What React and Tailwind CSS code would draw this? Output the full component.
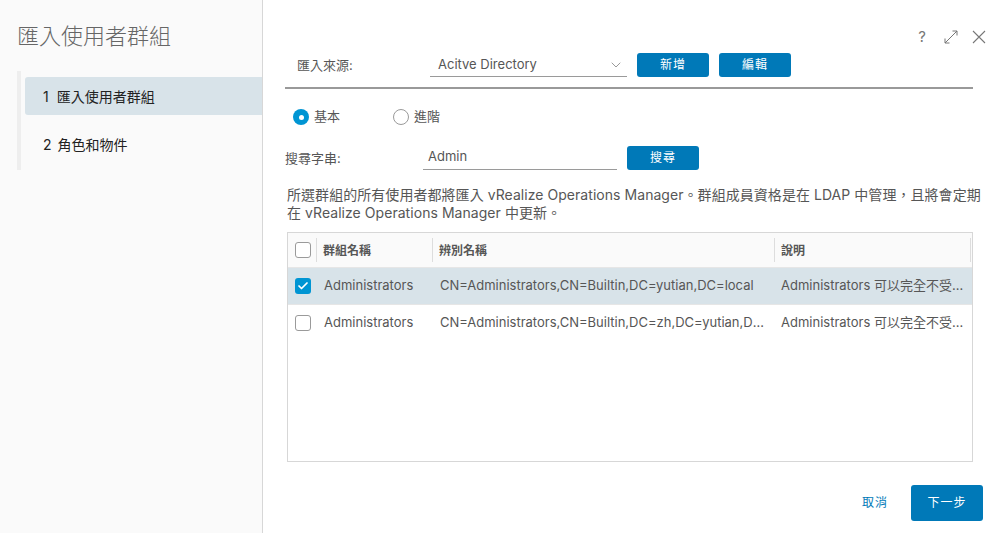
import { ChevronDown, Check } from "lucide-react";

const font = "font-['Inter','Noto_Sans_CJK_TC',sans-serif]";

const rows = [
  {
    checked: true,
    group: "Administrators",
    dn: "CN=Administrators,CN=Builtin,DC=yutian,DC=local",
    desc: "Administrators 可以完全不受限制地存取電腦/網域",
  },
  {
    checked: false,
    group: "Administrators",
    dn: "CN=Administrators,CN=Builtin,DC=zh,DC=yutian,DC=local",
    desc: "Administrators 可以完全不受限制地存取電腦/網域",
  },
];

function BlueButton({ children, className = "h-6" }) {
  return (
    <button
      type="button"
      className={`w-[72px] shrink-0 rounded-[3px] bg-[#0079b8] text-[12px] font-normal tracking-[1px] text-white ${className}`}
    >
      {children}
    </button>
  );
}

function Checkbox({ checked }) {
  if (checked) {
    return (
      <span className="grid h-4 w-4 shrink-0 place-items-center rounded-[3px] bg-[#0095d3]">
        <Check size={12} strokeWidth={3.5} className="text-white" />
      </span>
    );
  }
  return <span className="block h-4 w-4 shrink-0 rounded-[3px] border border-[#9a9a9a] bg-white" />;
}

function Radio({ checked, label, className = "" }) {
  return (
    <label className={`flex items-center gap-[5px] text-[13px] text-[#565656] ${className}`}>
      {checked ? (
        <span className="grid h-4 w-4 place-items-center rounded-full bg-[#0095d3]">
          <span className="h-[5px] w-[5px] rounded-full bg-white" />
        </span>
      ) : (
        <span className="h-4 w-4 rounded-full border border-[#9a9a9a] bg-white" />
      )}
      {label}
    </label>
  );
}

export default function App() {
  return (
    <div className={`flex h-[533px] w-[1001px] overflow-hidden bg-white ${font}`}>
      <aside className="w-[263px] shrink-0 border-r border-[#d7d7d7] bg-[#fafafa] pl-[17px]">
        <h1 className="mt-[22px] text-[22px] leading-7 font-light text-[#666]">匯入使用者群組</h1>
        <div className="mt-[21px] h-[99px] border-l-4 border-[#eeeeee] pt-[6px] pl-1">
          <div className="flex h-[38px] items-center gap-[8px] rounded-l-[3px] bg-[#d8e3e9] pl-[18px] text-[14px] text-[#222]">
            <span>1</span>
            <span>匯入使用者群組</span>
          </div>
          <div className="mt-[10px] flex h-[38px] items-center gap-[6px] pl-[18px] text-[14px] text-[#222]">
            <span>2</span>
            <span>角色和物件</span>
          </div>
        </div>
      </aside>

      <main className="min-w-0 flex-1 pt-[29px] pl-[22px]">
        <div className="flex h-4 items-center justify-end gap-[14px] pr-[15px] text-[#777]">
          <span className="mr-[4px] text-[15px] leading-4">?</span>
          <svg width="14" height="14" viewBox="0 0 14 14" fill="none" stroke="#777" strokeWidth="1">
            <path d="M1 13 13 1M8.5 1H13V5.5M1 8.5V13H5.5" />
          </svg>
          <svg width="14" height="14" viewBox="0 0 14 14" fill="none" stroke="#777" strokeWidth="1.1">
            <path d="M1 1 13 13M13 1 1 13" />
          </svg>
        </div>

        <div className="mt-2 flex h-6 items-center">
          <span className="ml-3 w-[133px] shrink-0 pt-[2px] text-[13px] text-[#565656]">匯入來源:</span>
          <div className="flex h-[24px] w-[197px] items-center justify-between border-b border-[#9a9a9a] pr-[3px] pl-2 text-[13px] text-[#565656]">
            <span>Acitve Directory</span>
            <ChevronDown size={16} strokeWidth={1.2} className="text-[#808080]" />
          </div>
          <BlueButton className="ml-[10px] h-6">新增</BlueButton>
          <BlueButton className="ml-[10px] h-6">編輯</BlueButton>
        </div>

        <div className="mt-[10px] h-[2px] w-[688px] bg-[#999]" />

        <div className="mt-[19px] ml-2 flex h-[18px] items-center">
          <Radio checked label="基本" className="w-[100px]" />
          <Radio label="進階" />
        </div>

        <div className="mt-[20px] flex h-6 items-center">
          <span className="w-[138px] shrink-0 pt-[2px] text-[13px] text-[#565656]">搜尋字串:</span>
          <div className="flex h-[23px] w-[194px] items-center border-b border-[#9a9a9a] pl-[5px] text-[13px] text-[#565656]">
            <span className="-mt-[1px]">Admin</span>
          </div>
          <BlueButton className="ml-[10px] h-6">搜尋</BlueButton>
        </div>

        <p className="mt-4 ml-[2px] w-[700px] text-[14px] leading-[18px] tracking-[0.05px] text-[#565656]">
          所選群組的所有使用者都將匯入 vRealize Operations Manager。群組成員資格是在 LDAP 中管理，且將會定期
          <br />
          在 vRealize Operations Manager 中更新。
        </p>

        <div className="mt-[10px] ml-[2px] h-[230px] w-[686px] border border-[#d7d7d7] bg-white">
          <div className="grid h-[35px] grid-cols-[29px_116px_342px_1fr] items-center border-b border-[#e6e6e6] bg-[#fafafa] text-[12px] font-bold text-[#565656]">
            <div className="flex h-6 items-center border-r border-[#ddd] pl-[7px]">
              <Checkbox />
            </div>
            <div className="flex h-6 items-center border-r border-[#ddd] pt-px pl-[6px]">群組名稱</div>
            <div className="flex h-6 items-center border-r border-[#ddd] pt-px pl-[6px]">辨別名稱</div>
            <div className="mr-[1px] flex h-6 items-center border-r border-[#ddd] pt-px pl-[6px]">說明</div>
          </div>
          {rows.map((row) => (
            <div
              key={row.dn}
              className={`grid h-[37px] grid-cols-[29px_116px_342px_1fr] items-center border-b text-[13px] text-[#565656] ${
                row.checked ? "border-[#e6e6e6] bg-[#d8e3e9]" : "border-transparent"
              }`}
            >
              <div className="pl-[7px]">
                <Checkbox checked={row.checked} />
              </div>
              <div className="truncate pl-[7px]">{row.group}</div>
              <div className="truncate pr-[6px] pl-[7px]">{row.dn}</div>
              <div className="truncate pr-[8px] pl-[6px]">{row.desc}</div>
            </div>
          ))}
        </div>

        <div className="mt-[23px] flex h-9 items-center">
          <span className="ml-[577px] w-[49px] text-[12px] tracking-[1px] text-[#0079b8]">取消</span>
          <BlueButton className="h-9">下一步</BlueButton>
        </div>
      </main>
    </div>
  );
}
